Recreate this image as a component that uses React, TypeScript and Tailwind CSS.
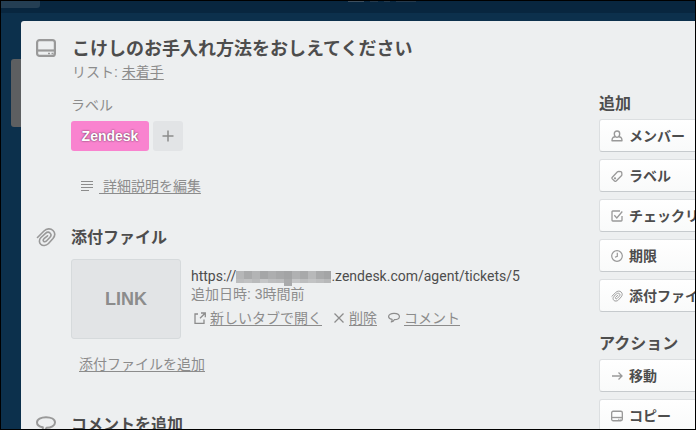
import type { ReactNode } from "react";

type IconProps = { className?: string };

const CardIcon = ({ className = "" }: IconProps) => (
  <svg viewBox="0 0 20 18" className={className} fill="none" stroke="currentColor" strokeWidth="2.200" aria-hidden="true">
    <rect x="1.100" y="1.100" width="17.800" height="15.800" rx="2.500" />
    <path d="M1 11.500h18" />
    <path d="M12 14.500h2M15.500 14.500h2" strokeWidth="1.600" />
  </svg>
);

const ClipIcon = ({ className = "" }: IconProps) => (
  <svg viewBox="0 0 20 20" className={className} fill="none" stroke="currentColor" strokeWidth="1.600" strokeLinecap="round" strokeLinejoin="round" aria-hidden="true">
    <path d="M1.500 10.500 8 4C10.500 1.500 14.500 1 17 3.500S19 9 17 11.500L12.500 16.500C10 19 6.500 19 4.700 17.200S3 12.500 5 10.500L9.500 6.300C11 5 13 5 14.200 6.200S15 9.200 13.800 10.500L10.200 14.200C9.300 15 8.300 15 7.600 14.200S7.200 12.500 8 11.700L11.500 8.800" />
  </svg>
);

const BubbleIcon = ({ className = "" }: IconProps) => (
  <svg viewBox="0 0 20 18" className={className} fill="none" stroke="currentColor" strokeWidth="2" strokeLinejoin="round" aria-hidden="true">
    <path d="M10 1.200c5 0 9 2 9 5.300s-4 5.300-8.500 5.300c-.8 1.900-2.500 3.300-5 3.700 1-1.200 1.500-2.600 1.300-4.300C3.300 10.600 1 9.200 1 6.500c0-3.300 4-5.300 9-5.300Z" />
  </svg>
);

const PersonIcon = ({ className = "" }: IconProps) => (
  <svg viewBox="0 0 12 12" className={className} fill="none" stroke="currentColor" strokeWidth="1.400" strokeLinejoin="round" aria-hidden="true">
    <path d="M4.300 6.500C3.500 5.800 3.300 4.800 3.300 3.700 3.300 2 4.500 1 6 1s2.700 1 2.700 2.700c0 1.100-.2 2.100-1 2.800L10 7.500c.7.500 1 1.900 1 3.300H1c0-1.400.3-2.800 1-3.300Z" />
    <path d="M4.300 6.500c1 .8 2.400.8 3.400 0" />
  </svg>
);

const TagIcon = ({ className = "" }: IconProps) => (
  <svg viewBox="0 0 12 12" className={className} fill="none" stroke="currentColor" strokeWidth="1.300" strokeLinejoin="round" aria-hidden="true">
    <path d="M1.300 7.200 6.500 1.800c.4-.4.8-.5 1.300-.5l2 .3c.5.1.8.4.9.9l.2 2c0 .5-.1.900-.5 1.300L5.200 11c-.5.500-1.200.5-1.700 0L1.300 8.900c-.5-.5-.5-1.200 0-1.700Z" />
    <circle cx="4" cy="8.300" r=".5" />
  </svg>
);

const CheckIcon = ({ className = "" }: IconProps) => (
  <svg viewBox="0 0 12 12" className={className} fill="none" stroke="currentColor" strokeWidth="1.300" aria-hidden="true">
    <path d="M9 1H1.800Q1 1 1 1.800v8.400q0 .8.800.8h8.400q.8 0 .8-.8V6" />
    <path d="m3.300 5.300 2.500 2.700L11.300 1.500" />
  </svg>
);

const ClockIcon = ({ className = "" }: IconProps) => (
  <svg viewBox="0 0 12 12" className={className} fill="none" stroke="currentColor" strokeWidth="1.200" aria-hidden="true">
    <circle cx="6" cy="6" r="5.300" />
    <path d="M6.300 2.800v3.500L4 7.200" />
  </svg>
);

const ArrowIcon = ({ className = "" }: IconProps) => (
  <svg viewBox="0 0 12 12" className={className} fill="none" stroke="currentColor" strokeWidth="1.300" aria-hidden="true">
    <path d="M1 6h10M7.500 2.500 11 6 7.500 9.500" />
  </svg>
);

const OpenIcon = ({ className = "" }: IconProps) => (
  <svg viewBox="0 0 12 12" className={className} fill="none" stroke="currentColor" strokeWidth="1.300" aria-hidden="true">
    <path d="M4 2H1v9.300h9V7.500M7 1h4.300v4.300M11 1.300 6 6.300" />
  </svg>
);

const CrossIcon = ({ className = "" }: IconProps) => (
  <svg viewBox="0 0 12 12" className={className} fill="none" stroke="currentColor" strokeWidth="1.300" aria-hidden="true">
    <path d="m1.500 1.500 9 9M10.500 1.500l-9 9" />
  </svg>
);

const LinesIcon = ({ className = "" }: IconProps) => (
  <svg viewBox="0 0 12 12" className={className} fill="none" stroke="currentColor" strokeWidth="1.100" aria-hidden="true">
    <path d="M0 1.500h12M0 4.500h12M0 7.500h12M0 10.500h8" />
  </svg>
);

const PlusIcon = ({ className = "" }: IconProps) => (
  <svg viewBox="0 0 12 12" className={className} fill="none" stroke="currentColor" strokeWidth="1.500" aria-hidden="true">
    <path d="M6 .5v11M.5 6h11" />
  </svg>
);

const maskTop = ["#b6b7b8", "#a9aaab", "#b3b4b5", "#a5a6a7", "#adaeaf", "#a7a8a9", "#a3a4a5", "#b0b1b2", "#a8a9aa", "#b8b9ba", "#a9aaab", "#a4a5a6"];
const maskBottom = ["#bcbdbe", "#c0c1c2", "#b9babb", "#c5c6c7", "#bdbebf", "#bbbcbd", "#a9aaab", "#c4c5c6", "#bcbdbe", "#c2c3c4", "#bdbebf", "#b7b8b9"];

const MaskedHost = () => (
  <svg viewBox="0 0 95 16" className="mt-1 h-4 w-[95px] shrink-0" shapeRendering="crispEdges" aria-hidden="true">
    {maskTop.map((c, i) => (
      <rect key={i} x={i * 8} y="0" width="8" height="8" fill={c} />
    ))}
    {maskBottom.map((c, i) => (
      <rect key={i} x={i * 8} y="8" width="8" height={i === 6 ? 7 : 4} fill={c} />
    ))}
  </svg>
);

const SideButton = ({ icon, children }: { icon: ReactNode; children: ReactNode }) => (
  <button
    type="button"
    className="flex h-[33px] w-36 items-center gap-1.5 rounded-[3px] border border-[#dcdfe1] border-b-[#c6cacd] bg-linear-to-b from-white to-[#f9fafa] pl-[11px] text-sm font-bold whitespace-nowrap text-[#4d4d4d]"
  >
    <span className="text-[#999999]">{icon}</span>
    {children}
  </button>
);

const ActionLink = ({ icon, children }: { icon: ReactNode; children: ReactNode }) => (
  <a href="#" className="flex items-center gap-1">
    {icon}
    <span className="underline underline-offset-2">{children}</span>
  </a>
);

export default function App() {
  return (
    <div className="relative flex h-screen overflow-hidden border border-black bg-[#0c304c] font-['Liberation_Sans','Noto_Sans_CJK_JP',sans-serif] text-sm text-[#8c8c8c]">
      <div className="absolute inset-x-0 top-0 h-3 bg-[#08263f]" aria-hidden="true">
        <div className="h-[7px] w-[39px] rounded-br-[3px] bg-[#243e53]" />
        <div className="absolute top-0 left-1/2 flex h-px gap-1.5">
          <div className="w-4 bg-[#3d4f5f]" />
          <div className="w-2 bg-[#24394c]" />
          <div className="w-1.5 bg-[#24394c]" />
          <div className="w-5 bg-[#24394c]" />
        </div>
      </div>
      <div className="absolute top-[58px] left-2.5 h-[68px] w-8 rounded-[3px] bg-[#5d5f61]" aria-hidden="true" />

      <div className="relative mt-5 ml-5 flex min-w-0 flex-1 rounded-tl-[3px] bg-[#edeff0]">
        <main className="flex min-w-0 flex-1 flex-col pt-[15px] pl-[15px]">
          <header className="flex gap-4">
            <CardIcon className="mt-[3px] h-[18px] w-5 shrink-0 text-[#999999]" />
            <div>
              <h1 className="text-lg leading-[26px] font-bold text-[#4d4d4d]">こけしのお手入れ方法をおしえてください</h1>
              <p className="leading-5">
                リスト: <a href="#" className="underline underline-offset-2">未着手</a>
              </p>
            </div>
          </header>

          <section className="mt-[13px] pl-[35px]">
            <h2 className="leading-5">ラベル</h2>
            <div className="mt-1.5 flex gap-1">
              <button type="button" className="h-[30px] w-[78px] rounded-[3px] bg-[#f983cf] font-bold text-white [text-shadow:0_0_2px_#000000b3]">
                Zendesk
              </button>
              <button type="button" aria-label="ラベルを追加" className="flex size-[30px] items-center justify-center rounded-[3px] bg-[#e2e4e6]">
                <PlusIcon className="size-3" />
              </button>
            </div>
            <a href="#" className="mt-[25px] flex w-fit items-center gap-1.5 pl-2.5 leading-5">
              <LinesIcon className="size-3" />
              <span className="whitespace-pre underline underline-offset-2"> 詳細説明を編集</span>
            </a>
          </section>

          <section className="mt-[29px]">
            <div className="flex gap-[15px]">
              <ClipIcon className="mt-0.5 size-5 text-[#999999]" />
              <h2 className="text-base leading-[26px] font-bold text-[#4d4d4d]">添付ファイル</h2>
            </div>
            <div className="mt-2 flex gap-2.5 pl-[35px]">
              <div className="flex h-20 w-[110px] shrink-0 items-center justify-center rounded-[3px] border border-[#d6dadc] bg-[#e2e4e6] text-lg font-bold">
                LINK
              </div>
              <div className="pt-2">
                <p className="flex h-[18px] font-['Roboto','Liberation_Sans',sans-serif] leading-[18px] text-[#4d4d4d]">
                  https://
                  <MaskedHost />
                  .zendesk.com/agent/tickets/5
                </p>
                <p className="leading-[18px]">追加日時: 3時間前</p>
                <div className="mt-1 flex gap-[11px] pl-[3px] leading-[22px]">
                  <ActionLink icon={<OpenIcon className="size-3" />}>新しいタブで開く</ActionLink>
                  <ActionLink icon={<CrossIcon className="size-3" />}>削除</ActionLink>
                  <ActionLink icon={<BubbleIcon className="size-3" />}>コメント</ActionLink>
                </div>
              </div>
            </div>
            <a href="#" className="mt-[15px] ml-[43px] block w-fit leading-5 underline underline-offset-2">
              添付ファイルを追加
            </a>
          </section>

          <section className="mt-[38px] flex gap-[15px]">
            <BubbleIcon className="mt-1 h-[18px] w-5 text-[#999999]" />
            <h2 className="text-base leading-[26px] font-bold text-[#4d4d4d]">コメントを追加</h2>
          </section>
        </main>

        <aside className="w-24 shrink-0 pt-[70px]">
          <h2 className="text-base leading-[26px] font-bold text-[#4d4d4d]">追加</h2>
          <div className="mt-0.5 flex flex-col gap-[7px]">
            <SideButton icon={<PersonIcon className="size-3" />}>メンバー</SideButton>
            <SideButton icon={<TagIcon className="size-3" />}>ラベル</SideButton>
            <SideButton icon={<CheckIcon className="size-3" />}>チェックリスト</SideButton>
            <SideButton icon={<ClockIcon className="size-3" />}>期限</SideButton>
            <SideButton icon={<ClipIcon className="size-3" />}>添付ファイル</SideButton>
          </div>
          <h2 className="mt-[19px] text-base leading-[26px] font-bold text-[#4d4d4d]">アクション</h2>
          <div className="mt-0.5 flex flex-col gap-[7px]">
            <SideButton icon={<ArrowIcon className="size-3" />}>移動</SideButton>
            <SideButton icon={<CardIcon className="size-3" />}>コピー</SideButton>
          </div>
        </aside>
      </div>
    </div>
  );
}
